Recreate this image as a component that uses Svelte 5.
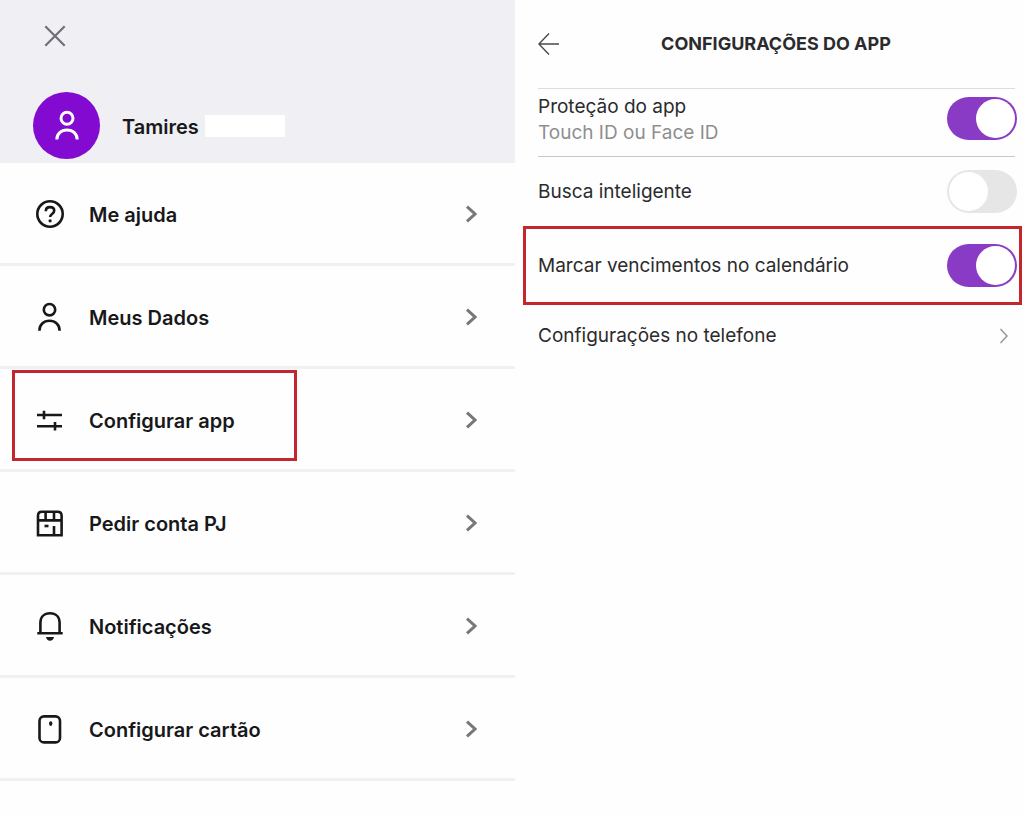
<script>
  const menu = [
    { icon: "help", label: "Me ajuda" },
    { icon: "person", label: "Meus Dados" },
    { icon: "sliders", label: "Configurar app", marked: true },
    { icon: "store", label: "Pedir conta PJ" },
    { icon: "bell", label: "Notificações" },
    { icon: "card", label: "Configurar cartão" },
  ];

  let protection = true;
  let search = false;
  let calendar = true;
</script>

<main>
  <section class="menu">
    <header>
      <button class="close" aria-label="Fechar">
        <svg width="22" height="22" viewBox="0 0 22 22">
          <path d="M1.3 1.3 20.7 20.7M20.7 1.3 1.3 20.7" />
        </svg>
      </button>
      <div class="profile">
        <div class="avatar">
          <svg width="30" height="32" viewBox="0 0 30 32">
            <circle cx="15" cy="8.3" r="6" />
            <path d="M4.8 29.5c0-5.8 4.3-9.6 10.2-9.6s10.2 3.8 10.2 9.6" />
          </svg>
        </div>
        <h2>Tamires</h2>
        <span class="surname"></span>
      </div>
    </header>

    <nav>
      {#each menu as item}
        <a href="#{item.icon}" class:marked={item.marked}>
          <svg class="icon" width="30" height="30" viewBox="0 0 30 30">
            {#if item.icon === "help"}
              <circle cx="15" cy="15" r="12.7" />
              <path d="M10.8 12.2c0-2.5 1.7-4.1 4.2-4.1s4.2 1.5 4.2 3.7c0 3.2-4.1 3.3-4.1 6.3" />
              <circle class="solid" cx="15.1" cy="21.8" r="1.6" />
            {:else if item.icon === "person"}
              <circle cx="14.5" cy="7.7" r="5.7" />
              <path d="M4.4 28.7c0-6 4.2-9.9 10.1-9.9s10.1 3.9 10.1 9.9" />
            {:else if item.icon === "sliders"}
              <path d="M2 10h25M9 5.7v8.6M2 21.2h25M20 16.9v8.6" />
            {:else if item.icon === "store"}
              <path d="M3 27.2V7.7q0-3.9 3.9-3.9h15.8q3.9 0 3.9 3.9v19.5zM3 12.4h23.6M10.6 3.800v8.600M19 3.800v8.600M19 27.200v-9.200" />
              <path d="M9.500 18h4" />
            {:else if item.icon === "bell"}
              <path d="M2.3 22.3h25.4M5.4 22.3V11.6c0-5.6 3.8-9.3 9.6-9.3s9.6 3.7 9.6 9.3v10.7" />
              <path class="solid" d="M11 26h8c-.4 2.4-1.9 3.8-4 3.8s-3.6-1.4-4-3.8z" />
            {:else}
              <rect x="4.5" y="2.4" width="20.5" height="26" rx="4.5" />
              <ellipse class="solid" cx="15.7" cy="9.600" rx="1.7" ry="2.4" />
            {/if}
          </svg>
          <span>{item.label}</span>
          <svg class="chevron" width="12" height="18" viewBox="0 0 12 18">
            <path d="m2 1.6 8 7.4-8 7.4" />
          </svg>
        </a>
      {/each}
    </nav>
  </section>

  <section class="settings">
    <header>
      <button class="back" aria-label="Voltar">
        <svg width="22" height="22" viewBox="0 0 22 22">
          <path d="M21 11H1M11 .6.9 11 11 21.4" />
        </svg>
      </button>
      <h1>CONFIGURAÇÕES DO APP</h1>
    </header>

    <label class="row protection">
      <span>
        Proteção do app
        <small>Touch ID ou Face ID</small>
      </span>
      <input type="checkbox" bind:checked={protection} />
    </label>
    <label class="row">
      <span>Busca inteligente</span>
      <input type="checkbox" bind:checked={search} />
    </label>
    <label class="row framed">
      <span>Marcar vencimentos no calendário</span>
      <input type="checkbox" bind:checked={calendar} />
    </label>
    <a class="row phone" href="#telefone">
      <span>Configurações no telefone</span>
      <svg width="10" height="16" viewBox="0 0 10 16">
        <path d="m1.5 1 6.5 7-6.5 7" />
      </svg>
    </a>
  </section>
</main>

<style>
  :global(body) {
    margin: 0;
    background: #fefefe;
  }

  main {
    display: grid;
    grid-template-columns: 515fr 509fr;
    font-family: Inter, "Liberation Sans", sans-serif;
    color: #18181a;
  }

  svg {
    display: block;
    flex: none;
    fill: none;
    stroke: currentColor;
  }

  button {
    display: block;
    padding: 0;
    border: 0;
    background: none;
    cursor: pointer;
  }

  a {
    color: inherit;
    text-decoration: none;
  }

  h1,
  h2 {
    margin: 0;
  }

  .menu header {
    padding: 25px 33px 4px 33px;
    background: #efeff4;
  }

  .close {
    margin-left: 11px;
    color: #6f6f78;
  }

  .close svg {
    stroke-width: 2.2;
  }

  .profile {
    display: flex;
    align-items: center;
    margin-top: 45px;
  }

  .avatar {
    display: flex;
    align-items: center;
    justify-content: center;
    width: 67px;
    height: 67px;
    border-radius: 50%;
    background: #820ad1;
    color: white;
  }

  .avatar svg {
    stroke-width: 3;
  }

  h2 {
    margin-left: 22px;
    padding-top: 2px;
    font-size: 20px;
    font-weight: 600;
    line-height: 24px;
  }

  .surname {
    width: 80px;
    height: 22px;
    margin-left: 6px;
    background: white;
  }

  .menu a {
    position: relative;
    display: flex;
    align-items: center;
    height: 98px;
    padding: 2px 38px 0 35px;
    border-bottom: 3px solid #f1f1f3;
    font-size: 20px;
    font-weight: 600;
    line-height: 24px;
  }

  .menu a span {
    flex: 1;
    margin-left: 24px;
    padding-top: 2px;
  }

  .icon {
    stroke-width: 2.6;
  }

  .solid {
    fill: currentColor;
    stroke: none;
  }

  .chevron {
    color: #77777a;
    stroke-width: 3;
  }

  .marked::after {
    content: "";
    position: absolute;
    top: 1px;
    left: 12px;
    width: 279px;
    height: 85px;
    border: 3px solid #c4262e;
  }

  .settings {
    padding: 0 2px 0 8px;
    color: #2b2b2d;
  }

  .settings header {
    display: flex;
    align-items: center;
    height: 88px;
    padding-left: 15px;
  }

  .back {
    color: #4a4a4c;
  }

  .back svg {
    stroke-width: 1.4;
  }

  h1 {
    flex: 1;
    padding-right: 30px;
    font-size: 18px;
    font-weight: 700;
    line-height: 24px;
    text-align: center;
  }

  .row {
    display: flex;
    align-items: center;
    justify-content: space-between;
    height: 69px;
    padding: 0 5px 0 15px;
    font-size: 19px;
    line-height: 26px;
  }

  .protection {
    height: 67px;
    margin: 0 7px 0 15px;
    padding: 0;
    border-top: 1px solid #dddddf;
    border-bottom: 1px solid #c9c9cb;
  }

  .protection input {
    margin: 0 -2px 8px 0;
  }

  .protection span {
    margin-bottom: 6px;
  }

  small {
    display: block;
    font-size: 19px;
    color: #8e8e90;
  }

  .framed {
    height: 73px;
    padding: 0 2px 0 12px;
    border: 3px solid #c4262e;
  }

  .phone {
    height: 62px;
    padding-right: 13px;
  }

  .phone svg {
    color: #98989a;
    stroke-width: 1.5;
  }

  input {
    flex: none;
    box-sizing: border-box;
    appearance: none;
    display: flex;
    width: 70px;
    height: 43px;
    margin: 0;
    padding: 2px;
    border-radius: 22px;
    background: #e6e6e7;
    cursor: pointer;
  }

  input::before {
    content: "";
    width: 39px;
    height: 39px;
    border-radius: 50%;
    background: white;
  }

  input:checked {
    justify-content: flex-end;
    background: #8a3bc6;
  }
</style>
